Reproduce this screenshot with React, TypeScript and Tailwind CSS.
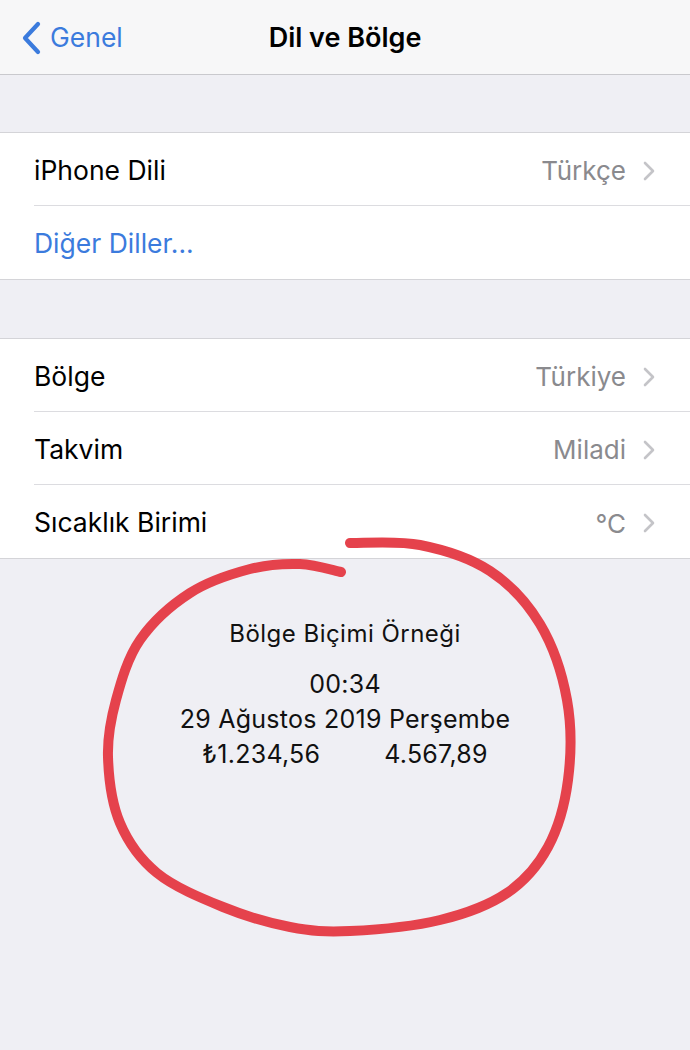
import React from "react";

const font = { fontFamily: "Inter, 'Noto Sans', 'DejaVu Sans', sans-serif" };

// hand-drawn circle, traced from the screenshot
const circlePoints: [number, number][] = [
  [350, 543], [420, 545], [490, 571], [540, 624], [567, 700], [568, 780],
  [548, 847], [507, 893], [440, 920], [350, 931], [290, 927], [223, 907],
  [157, 873], [120, 823], [108, 757], [116, 700], [140, 640], [190, 593],
  [250, 569], [300, 564], [341, 572],
];

const toPath = (pts: [number, number][]) => {
  let d = `M${pts[0][0]},${pts[0][1]}`;
  for (let i = 0; i < pts.length - 1; i++) {
    const p0 = pts[i - 1] || pts[i];
    const p1 = pts[i];
    const p2 = pts[i + 1];
    const p3 = pts[i + 2] || p2;
    const c1x = p1[0] + (p2[0] - p0[0]) / 6;
    const c1y = p1[1] + (p2[1] - p0[1]) / 6;
    const c2x = p2[0] - (p3[0] - p1[0]) / 6;
    const c2y = p2[1] - (p3[1] - p1[1]) / 6;
    d += ` C${c1x},${c1y} ${c2x},${c2y} ${p2[0]},${p2[1]}`;
  }
  return d;
};

const Chevron = () => (
  <svg width="14" height="22" viewBox="0 0 14 22" className="ml-[16px] shrink-0">
    <path d="M3 3 L11 11 L3 19" fill="none" stroke="#c4c4c8" strokeWidth="2.6" strokeLinecap="round" strokeLinejoin="round" />
  </svg>
);

interface RowProps {
  label: string;
  value?: string;
  blue?: boolean;
  last?: boolean;
}

const Row: React.FC<RowProps> = ({ label, value, blue, last }) => (
  <div className="pl-[34px] bg-white">
    <div className={`h-[73px] flex items-center pr-[34px] pt-[3px] ${last ? "" : "border-b border-[#dcdce0]"}`}>
      <span className={`flex-1 text-[26.5px] ${blue ? "text-[#3b7bdd]" : "text-black"}`}>{label}</span>
      {value && (
        <>
          <span className="text-[26px] text-[#8a8a8e]">{value}</span>
          <Chevron />
        </>
      )}
    </div>
  </div>
);

export default function App() {
  return (
    <div className="relative w-[690px] h-[1050px] bg-[#efeff4] overflow-hidden" style={font}>
      {/* Nav bar */}
      <div className="h-[75px] bg-[#f7f7f8] border-b border-[#c9c9cd] grid grid-cols-[1fr_auto_1fr] items-center pt-[2px]">
        <div className="flex items-center pl-[21px] text-[#3b7bdd]">
          <svg width="22" height="34" viewBox="0 0 22 34">
            <path d="M17 3 L4 17 L17 31" fill="none" stroke="#3b7bdd" strokeWidth="4.2" strokeLinecap="round" strokeLinejoin="round" />
          </svg>
          <span className="ml-[7px] text-[26.5px]">Genel</span>
        </div>
        <div className="text-[27px] font-semibold text-black">Dil ve Bölge</div>
        <div />
      </div>

      <div className="h-[57px]" />

      <div className="border-y border-[#d4d4d8]">
        <Row label="iPhone Dili" value="Türkçe" />
        <Row label="Diğer Diller..." blue last />
      </div>

      <div className="h-[58px]" />

      <div className="border-y border-[#d4d4d8]">
        <Row label="Bölge" value="Türkiye" />
        <Row label="Takvim" value="Miladi" />
        <Row label="Sıcaklık Birimi" value="°C" last />
      </div>

      {/* Region format example */}
      <div className="flex flex-col items-center pt-[59px] text-[#111]">
        <div className="text-[24px] leading-[32px] tracking-[0.02em]">Bölge Biçimi Örneği</div>
        <div className="mt-[17px] text-[25px] leading-[35px] tracking-[0.01em]">00:34</div>
        <div className="text-[25px] leading-[35px] tracking-[0.01em]">29 Ağustos 2019 Perşembe</div>
        <div className="flex gap-[64px] text-[25px] leading-[35px] tracking-[0.01em]">
          <span>₺1.234,56</span>
          <span>4.567,89</span>
        </div>
      </div>

      {/* red marker circle drawn over the screenshot */}
      <svg className="absolute inset-0 pointer-events-none" width="690" height="1050" viewBox="0 0 690 1050">
        <path d={toPath(circlePoints)} fill="none" stroke="#e5424c" strokeWidth="10" strokeLinecap="round" strokeLinejoin="round" />
      </svg>
    </div>
  );
}
